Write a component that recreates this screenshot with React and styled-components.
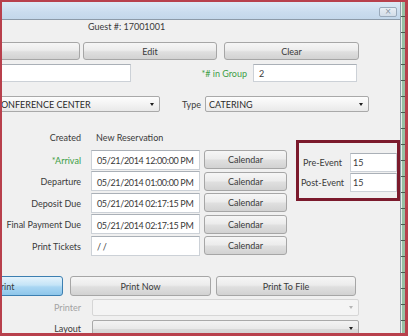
import React from 'react';
import styled, { createGlobalStyle } from 'styled-components';

const GlobalStyle = createGlobalStyle`
  html, body { margin: 0; padding: 0; }
  body {
    width: 408px;
    height: 336px;
    overflow: hidden;
    font-family: Lato, "Noto Sans", sans-serif;
  }
`;

const Frame = styled.div`
  box-sizing: border-box;
  width: 408px;
  height: 336px;
  border-style: solid;
  border-color: #b8404c;
  border-width: 2px 3px 3px 2px;
  display: flex;
`;

const Window = styled.div`
  flex: 1;
  min-width: 0;
  display: flex;
  flex-direction: column;
  border-right: 1px solid #8e9aa6;
`;

const Strip = styled.div`
  width: 4px;
  flex: none;
  background:
    repeating-linear-gradient(
      to bottom,
      transparent 0 14px,
      #4d5d52 14px 15px,
      transparent 15px 16px
    ),
    linear-gradient(to right, #e6ece8 0 1px, #98c0a4 1px);
`;

const TitleBar = styled.div`
  box-sizing: border-box;
  height: 18px;
  flex: none;
  background: linear-gradient(#dde9f5, #cadcee 60%, #c3d7ea);
  border-bottom: 1px solid #8c9aa8;
  display: flex;
  justify-content: flex-end;
  align-items: flex-start;
  padding: 5px 3px 0 0;
`;

const CloseBtn = styled.div`
  box-sizing: border-box;
  width: 18px;
  height: 10px;
  border: 1px solid #9aaabb;
  border-radius: 2px;
  background: linear-gradient(#e8eef5, #d3dde8);
  color: #8592a0;
  font-size: 8px;
  line-height: 8px;
  text-align: center;
  font-family: "DejaVu Sans", sans-serif;
`;

const Body = styled.div`
  flex: 1;
  min-height: 0;
  overflow: hidden;
  background: #f0f0f0;
  display: flex;
  flex-direction: column;
  font-size: 9px;
  color: #3a3a3a;
`;

const GuestLine = styled.div`
  height: 14px;
  line-height: 14px;
  padding-left: 86px;
  flex: none;
`;

const Row = styled.div`
  display: flex;
  align-items: center;
  flex: none;
  height: ${p => p.$h}px;
  margin-top: ${p => p.$mt}px;
`;

const Button = styled.button`
  box-sizing: border-box;
  flex: none;
  width: ${p => p.$w}px;
  height: ${p => p.$h || 18}px;
  margin: 0 0 0 ${p => p.$ml || 0}px;
  padding: 0;
  font: inherit;
  color: #3a3a3a;
  display: flex;
  align-items: center;
  justify-content: center;
  border-radius: 3px;
  border: 1px solid ${p => (p.$active ? '#3c7fb1' : '#a6a6a6')};
  background: ${p =>
    p.$active
      ? 'linear-gradient(#e5f3fc, #c4e4f7 45%, #a9d6f3 55%, #8ec6ea)'
      : 'linear-gradient(#f6f6f6, #ececec 45%, #dfdfdf 55%, #d2d2d2)'};
`;

const TextBox = styled.div`
  box-sizing: border-box;
  flex: none;
  width: ${p => p.$w}px;
  height: ${p => p.$h || 18}px;
  margin-left: ${p => p.$ml || 0}px;
  background: #fff;
  border: 1px solid #ccd1d7;
  border-top-color: #aab0b7;
  padding: ${p => p.$pt || 0}px 0 0 ${p => p.$pl || 4}px;
  display: flex;
  align-items: center;
  white-space: nowrap;
  overflow: hidden;
  color: #3a3a3a;
`;

const Combo = styled.div`
  box-sizing: border-box;
  flex: none;
  width: ${p => p.$w}px;
  height: ${p => p.$h || 16}px;
  margin-left: ${p => p.$ml || 0}px;
  border: 1px solid ${p => (p.$disabled ? '#d6d6d6' : '#a9a9a9')};
  border-radius: 2px;
  background: ${p =>
    p.$disabled
      ? '#f4f4f4'
      : p.$shade
      ? 'linear-gradient(#f3f3f3, #e9e9e9 50%, #dadada 52%, #d0d0d0)'
      : 'linear-gradient(#fdfdfd, #f3f3f3 50%, #e9e9e9)'};
  display: flex;
  align-items: center;
  padding: 0 5px 0 3px;
  white-space: nowrap;
  overflow: hidden;
  color: #2a2a2a;
`;

const ComboText = styled.span`
  flex: 1;
  overflow: hidden;
`;

const Arrow = styled.span`
  flex: none;
  width: 0;
  height: 0;
  border-left: 2.5px solid transparent;
  border-right: 2.5px solid transparent;
  border-top: 3px solid ${p => (p.$disabled ? '#b5b5b5' : '#1e1e1e')};
`;

const Label = styled.div`
  box-sizing: border-box;
  flex: none;
  width: ${p => p.$w}px;
  text-align: right;
  padding-right: ${p => p.$pr || 0}px;
  color: ${p =>
    p.$tone === 'green' ? '#3d9e46' : p.$tone === 'muted' ? '#a3a3a3' : '#3a3a3a'};
  white-space: nowrap;
`;

const DateGrid = styled.div`
  display: grid;
  flex: none;
  margin-top: 16px;
  grid-template-columns: 89px 113px 92px 104px;
  grid-template-rows: 21px repeat(5, 21.5px);
  align-items: center;
`;

const GridLabel = styled.div`
  grid-column: 1;
  padding-right: 10px;
  text-align: right;
  color: ${p => (p.$tone === 'green' ? '#3d9e46' : '#3a3a3a')};
  white-space: nowrap;
  align-self: ${p => (p.$top ? 'start' : 'center')};
  line-height: ${p => (p.$top ? '19px' : 'normal')};
  padding-top: ${p => (p.$top ? 0 : 1)}px;
`;

const CreatedValue = styled.div`
  grid-column: 2;
  align-self: start;
  line-height: 19px;
  padding-left: 5px;
  white-space: nowrap;
`;

const DateBox = styled(TextBox)`
  grid-column: 2;
  width: 109px;
  height: 20px;
  padding: 2px 0 0 5px;
  letter-spacing: -0.35px;
`;

const CalButton = styled(Button)`
  grid-column: 3;
  width: 83px;
  height: 19px;
`;

const EventBox = styled.div`
  grid-column: 4;
  grid-row: 1 / span 4;
  align-self: stretch;
  margin: 12px 0 12.5px 0;
  box-sizing: border-box;
  border: 3px solid #7b1a2c;
  padding-top: 10px;
  display: grid;
  grid-template-columns: 47px 47px;
  grid-auto-rows: 19px;
  column-gap: 4px;
  row-gap: 1px;
  align-content: start;
  align-items: center;
`;

const EventLabel = styled.div`
  text-align: center;
  white-space: nowrap;
`;

const EventInput = styled(TextBox)`
  width: 47px;
  height: 19px;
  padding-left: 2px;
`;

const dateRows = [
  { label: '*Arrival', value: '05/21/2014 12:00:00 PM', tone: 'green' },
  { label: 'Departure', value: '05/21/2014 01:00:00 PM' },
  { label: 'Deposit Due', value: '05/21/2014 02:17:15 PM' },
  { label: 'Final Payment Due', value: '05/21/2014 02:17:15 PM' },
  { label: 'Print Tickets', value: ' / /' },
];

export default function App() {
  return (
    <>
      <GlobalStyle />
      <Frame>
        <Window>
          <TitleBar>
            <CloseBtn>×</CloseBtn>
          </TitleBar>
          <Body>
            <GuestLine>Guest #: 17001001</GuestLine>

            <Row $h={18} $mt={8}>
              <Button $w={122} $ml={-44} />
              <Button $w={134} $ml={3}>Edit</Button>
              <Button $w={135} $ml={7}>Clear</Button>
            </Row>

            <Row $h={18} $mt={4}>
              <TextBox $w={150} $ml={-21} />
              <Label $w={116} $tone="green">*# in Group</Label>
              <TextBox $w={104} $ml={6} $pl={5}>2</TextBox>
            </Row>

            <Row $h={16} $mt={14}>
              <Combo $w={169} $ml={-11}>
                <ComboText>CONFERENCE CENTER</ComboText>
                <Arrow />
              </Combo>
              <Label $w={45} $pr={4}>Type</Label>
              <Combo $w={164}>
                <ComboText>CATERING</ComboText>
                <Arrow />
              </Combo>
            </Row>

            <DateGrid>
              <GridLabel $top>Created</GridLabel>
              <CreatedValue>New Reservation</CreatedValue>
              <EventBox>
                <EventLabel>Pre-Event</EventLabel>
                <EventInput>15</EventInput>
                <EventLabel>Post-Event</EventLabel>
                <EventInput>15</EventInput>
              </EventBox>
              {dateRows.map((r, i) => (
                <React.Fragment key={r.label}>
                  <GridLabel $tone={r.tone} style={{ gridRow: i + 2 }}>
                    {r.label}
                  </GridLabel>
                  <DateBox style={{ gridRow: i + 2 }}>{r.value}</DateBox>
                  <CalButton style={{ gridRow: i + 2 }}>Calendar</CalButton>
                </React.Fragment>
              ))}
            </DateGrid>

            <Row $h={20} $mt={19.5}>
              <Button $w={116} $h={20} $ml={-55} $active>Print</Button>
              <Button $w={141} $h={20} $ml={7}>Print Now</Button>
              <Button $w={140} $h={20} $ml={5}>Print To File</Button>
            </Row>

            <Row $h={17} $mt={3}>
              <Label $w={79} $tone="muted">Printer</Label>
              <Combo $w={267} $h={17} $ml={11} $disabled>
                <ComboText />
                <Arrow $disabled />
              </Combo>
            </Row>

            <Row $h={17} $mt={4}>
              <Label $w={79}>Layout</Label>
              <Combo $w={267} $h={17} $ml={11} $shade>
                <ComboText />
                <Arrow />
              </Combo>
            </Row>
          </Body>
        </Window>
        <Strip />
      </Frame>
    </>
  );
}
